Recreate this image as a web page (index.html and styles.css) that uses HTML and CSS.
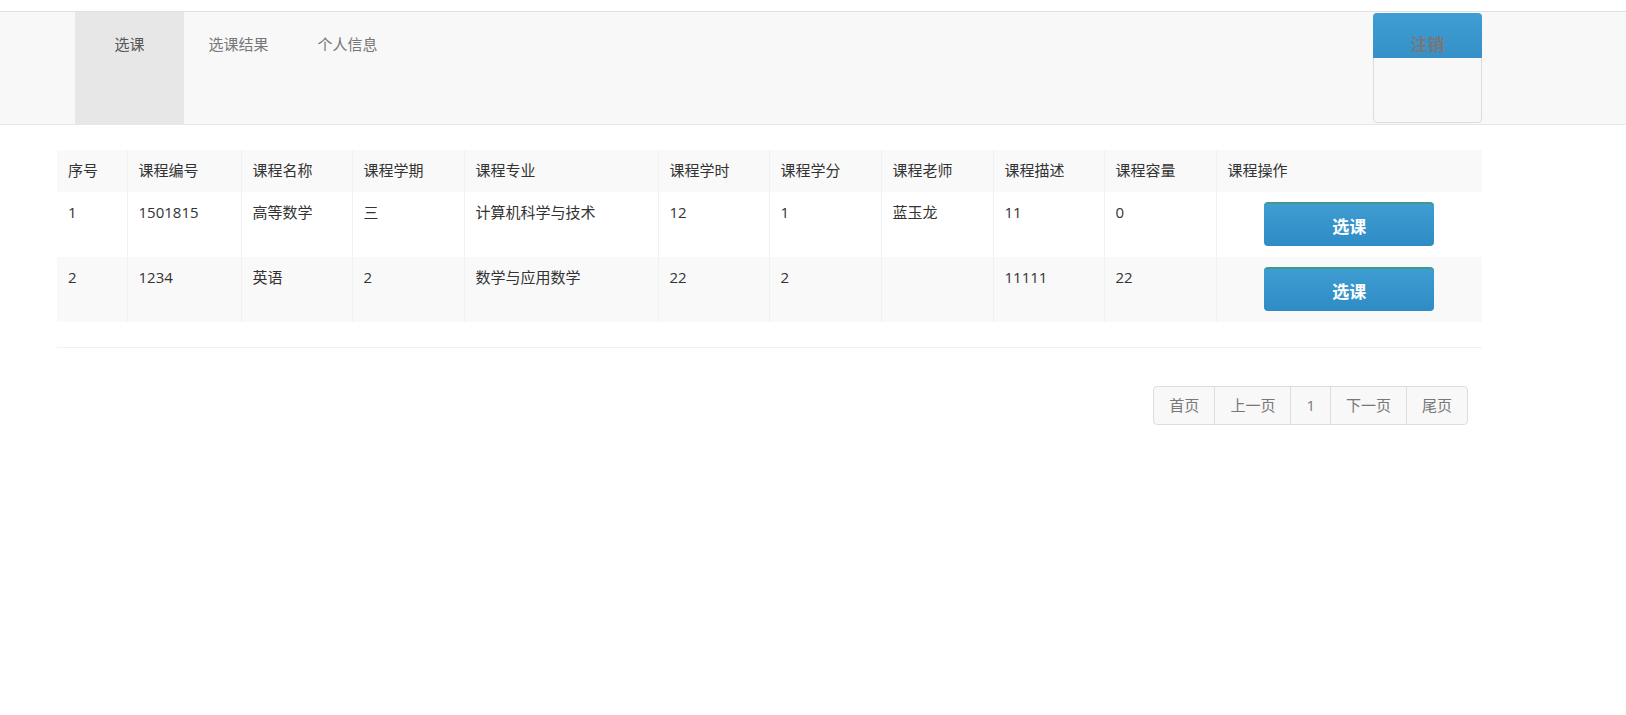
FILE: index.html
```html
<!DOCTYPE html>
<html lang="zh-CN">

<head>
    <meta charset="UTF-8">
    <meta name="viewport" content="width=device-width, initial-scale=1.0">
    <title>选课</title>
    <link rel="stylesheet" href="styles.css">
</head>

<body>
    <nav class="navbar">
        <ul class="nav">
            <li class="active"><a href="#">选课</a></li>
            <li><a href="#">选课结果</a></li>
            <li><a href="#">个人信息</a></li>
        </ul>
        <div class="logout">
            <a href="#" class="logout-btn">注销</a>
        </div>
    </nav>

    <div class="main">
        <table class="course-table">
            <colgroup>
                <col style="width: 70px">
                <col style="width: 114px">
                <col style="width: 111px">
                <col style="width: 112px">
                <col style="width: 194px">
                <col style="width: 111px">
                <col style="width: 112px">
                <col style="width: 112px">
                <col style="width: 111px">
                <col style="width: 112px">
                <col style="width: 266px">
            </colgroup>
            <tbody>
                <tr class="stripe">
                    <td>序号</td>
                    <td>课程编号</td>
                    <td>课程名称</td>
                    <td>课程学期</td>
                    <td>课程专业</td>
                    <td>课程学时</td>
                    <td>课程学分</td>
                    <td>课程老师</td>
                    <td>课程描述</td>
                    <td>课程容量</td>
                    <td>课程操作</td>
                </tr>
                <tr>
                    <td>1</td>
                    <td>1501815</td>
                    <td>高等数学</td>
                    <td>三</td>
                    <td>计算机科学与技术</td>
                    <td>12</td>
                    <td>1</td>
                    <td>蓝玉龙</td>
                    <td>11</td>
                    <td>0</td>
                    <td class="op"><button class="choose">选课</button></td>
                </tr>
                <tr class="stripe">
                    <td>2</td>
                    <td>1234</td>
                    <td>英语</td>
                    <td>2</td>
                    <td>数学与应用数学</td>
                    <td>22</td>
                    <td>2</td>
                    <td></td>
                    <td>11111</td>
                    <td>22</td>
                    <td class="op"><button class="choose">选课</button></td>
                </tr>
            </tbody>
        </table>

        <div class="divider"></div>

        <div class="pager">
            <ul class="pagination">
                <li><a href="#">首页</a></li>
                <li><a href="#">上一页</a></li>
                <li><a href="#">1</a></li>
                <li><a href="#">下一页</a></li>
                <li><a href="#">尾页</a></li>
            </ul>
        </div>
    </div>
</body>

</html>
```

FILE: styles.css
```css
body {
    margin: 0;
    padding-top: 11px;
    font-family: "Open Sans", "Noto Sans CJK SC", sans-serif;
    font-size: 15px;
    color: #333;
    background-color: #fff;
}

a {
    text-decoration: none;
}

ul {
    list-style: none;
    margin: 0;
    padding: 0;
}

.navbar {
    display: flex;
    height: 112px;
    padding: 0 144px 0 75px;
    background-color: #f8f8f8;
    border-top: 1px solid #e0e0e0;
    border-bottom: 1px solid #e7e7e7;
}

.nav {
    display: flex;
}

.nav li a {
    display: block;
    width: 109px;
    height: 112px;
    box-sizing: border-box;
    padding-top: 22px;
    line-height: 21px;
    text-align: center;
    color: #777;
}

.nav li.active a {
    background-color: #e7e7e7;
    color: #555;
}

.logout {
    margin-left: auto;
    margin-top: 1px;
    width: 109px;
    height: 110px;
    box-sizing: border-box;
    border: 1px solid #dcdcdc;
    border-radius: 4px;
}

.logout-btn {
    display: block;
    margin: -1px -1px 0;
    height: 45px;
    box-sizing: border-box;
    padding-top: 21px;
    line-height: 21px;
    border-radius: 4px 4px 0 0;
    background: linear-gradient(#409ed3, #3590c8);
    color: #777;
    font-weight: bold;
    font-size: 17px;
    text-align: center;
}

.main {
    padding: 25px 144px 0 57px;
}

.course-table {
    width: 1425px;
    table-layout: fixed;
    border-collapse: collapse;
}

.course-table td {
    padding: 10px 11px 11px;
    line-height: 21px;
    vertical-align: top;
    border: 1px solid #f1f1f1;
    border-top: 0;
    border-bottom: 0;
}

.course-table tr td:first-child {
    border-left: 0;
}

.course-table tr td:last-child {
    border-right: 0;
}

.course-table tr.stripe td {
    background-color: #f9f9f9;
}

.course-table td.op {
    text-align: center;
}

.choose {
    display: inline-block;
    width: 170px;
    height: 44px;
    margin: 0;
    padding: 0;
    border: 0;
    border-top: 2px solid #3e9a8a;
    border-radius: 4px;
    background: linear-gradient(#3f9dd2, #2f8bc5);
    color: #fff;
    font-family: "Noto Sans CJK SC", sans-serif;
    font-size: 17px;
    font-weight: bold;
    cursor: pointer;
    vertical-align: top;
}

.divider {
    margin-top: 25px;
    border-top: 1px solid #f1f1f1;
}

.pager {
    display: flex;
    justify-content: flex-end;
    padding: 38px 14px 0 0;
}

.pagination {
    display: flex;
}

.pagination li a {
    display: block;
    padding: 8px 15px;
    line-height: 21px;
    font-size: 15px;
    color: #777;
    background-color: #f8f8f8;
    border: 1px solid #ddd;
    margin-left: -1px;
}

.pagination li:first-child a {
    margin-left: 0;
    border-radius: 4px 0 0 4px;
}

.pagination li:last-child a {
    border-radius: 0 4px 4px 0;
}
```
